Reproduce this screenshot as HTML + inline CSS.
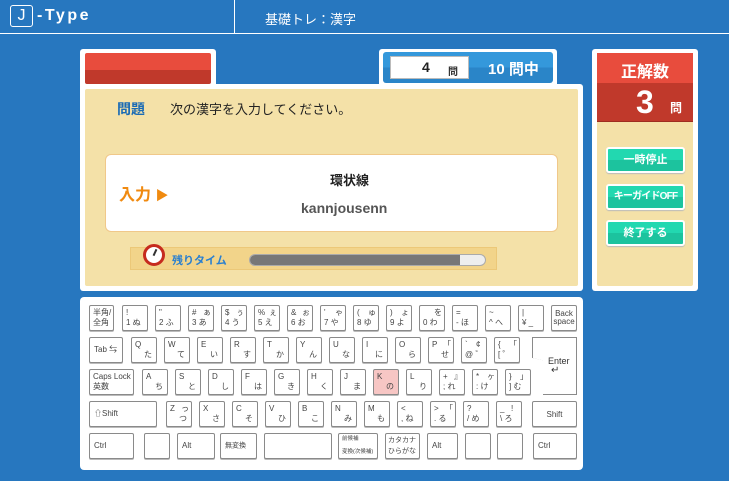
<!DOCTYPE html>
<html><head><meta charset="utf-8"><style>
*{margin:0;padding:0;box-sizing:border-box}
body{width:729px;height:481px;background:#2777bf;position:relative;overflow:hidden;font-family:"Liberation Sans","Noto Sans CJK JP",sans-serif}
.a{position:absolute}
.k{position:absolute;background:#fff;border:1px solid #8a8a8a;border-radius:2px;box-shadow:0 1px 0 #bbb;font-size:8px;color:#444;line-height:1;white-space:nowrap}
.k .tl{position:absolute;left:3px;top:3px}
.k .tr{position:absolute;left:14px;top:3px}
.k .bl{position:absolute;left:3px;bottom:3px}
.k .br{position:absolute;right:4px;bottom:3px}
.k .c{position:absolute;left:4px;top:50%;transform:translateY(-50%)}
.btn{position:absolute;left:606px;width:79px;height:26px;background:linear-gradient(#22d8b0 50%,#1cc39e 50%);border:2px solid #fff;border-radius:3px;color:#fff;font-size:11px;font-weight:bold;text-align:center;line-height:22px;box-shadow:0 1px 1px #bbb;white-space:nowrap}
</style></head><body>
<!-- header -->
<div class="a" style="left:0;top:33px;width:729px;height:1px;background:#fff"></div>
<div class="a" style="left:234px;top:0;width:1px;height:33px;background:#fff"></div>
<div class="a" style="left:10px;top:5px;width:23px;height:22px;border:1.5px solid #fff;border-radius:3px;color:#fff;font-size:16px;text-align:center;line-height:19px">J</div>
<div class="a" style="left:37px;top:7px;color:#fff;font-size:16px;letter-spacing:2.5px;font-weight:bold">-Type</div>
<div class="a" style="left:265px;top:9px;color:#fff;font-size:13px">基礎トレ：漢字</div>

<!-- left tab red board -->
<div class="a" style="left:80px;top:49px;width:136px;height:40px;background:#fff;border-radius:3px"></div>
<div class="a" style="left:85px;top:53px;width:126px;height:31px;background:linear-gradient(#e84c3d 55%,#c0392b 55%);border-radius:2px"></div>
<!-- counter tab -->
<div class="a" style="left:379px;top:49px;width:178px;height:40px;background:#fff;border-radius:3px"></div>
<div class="a" style="left:383px;top:52px;width:170px;height:31px;background:linear-gradient(#3498db 50%,#2a85c8 50%);border-radius:3px"></div>
<div class="a" style="left:390px;top:56px;width:79px;height:23px;background:#fff;border:1px solid #bbb"></div>
<div class="a" style="left:422px;top:59px;font-size:14px;font-weight:bold;color:#222">4</div>
<div class="a" style="left:448px;top:63px;font-size:10px;font-weight:bold;color:#333">問</div>
<div class="a" style="left:488px;top:58px;font-size:15px;font-weight:bold;color:#fff">10 問中</div>

<!-- main panel -->
<div class="a" style="left:80px;top:84px;width:503px;height:207px;background:#fff;border-radius:3px"></div>
<div class="a" style="left:85px;top:89px;width:493px;height:197px;background:#f4e1a8;border-radius:2px"></div>
<div class="a" style="left:117px;top:99px;font-size:14px;font-weight:bold;color:#1a6bb5">問題</div>
<div class="a" style="left:170px;top:99px;font-size:13px;color:#222">次の漢字を入力してください。</div>
<div class="a" style="left:105px;top:154px;width:453px;height:78px;background:#fff;border:1px solid #f0c88a;border-radius:6px"></div>
<div class="a" style="left:119px;top:181px;font-size:16px;font-weight:bold;color:#f08a10">入力 <span style="font-size:13px">▶</span></div>
<div class="a" style="left:330px;top:170px;font-size:13px;font-weight:bold;color:#222">環状線</div>
<div class="a" style="left:301px;top:200px;font-size:14px;font-weight:bold;color:#555">kannjousenn</div>
<div class="a" style="left:130px;top:247px;width:367px;height:23px;background:#f2d48a;border:1px solid #ecc878"></div>
<div class="a" style="left:143px;top:244px;width:22px;height:22px;border-radius:50%;background:#fff;border:3px solid #c62b1e"></div>
<div class="a" style="left:154px;top:249px;width:2px;height:7px;background:#333;transform:rotate(25deg)"></div>
<div class="a" style="left:172px;top:252px;font-size:11px;font-weight:bold;color:#2a7fcf">残りタイム</div>
<div class="a" style="left:249px;top:254px;width:237px;height:12px;background:#eee;border:1px solid #aaa;border-radius:6px;overflow:hidden"><div style="width:210px;height:12px;background:#777"></div></div>

<!-- right panel -->
<div class="a" style="left:592px;top:49px;width:106px;height:242px;background:#fff;border-radius:3px"></div>
<div class="a" style="left:597px;top:53px;width:96px;height:233px;background:#f4e1a8;border-radius:2px"></div>
<div class="a" style="left:597px;top:53px;width:96px;height:30px;background:#e84c3d"></div>
<div class="a" style="left:597px;top:83px;width:96px;height:39px;background:#c0392b;border-bottom:1px solid #9e2c20"></div>
<div class="a" style="left:597px;top:58px;width:96px;text-align:center;font-size:16px;font-weight:bold;color:#fff">正解数</div>
<div class="a" style="left:636px;top:84px;font-size:32px;font-weight:bold;color:#fff">3</div>
<div class="a" style="left:670px;top:99px;font-size:12px;font-weight:bold;color:#fff">問</div>
<div class="btn" style="top:147px">一時停止</div>
<div class="btn" style="top:184px;font-size:10px;letter-spacing:-0.8px">キーガイドOFF</div>
<div class="btn" style="top:220px">終了する</div>

<!-- keyboard -->
<div class="a" style="left:80px;top:297px;width:503px;height:173px;background:#fff;border-radius:4px"></div>

<div class="k" style="left:89px;top:305px;width:25px;height:26px"><span class="tl">半角/</span><span class="bl">全角</span></div>
<div class="k" style="left:122px;top:305px;width:26px;height:26px"><span class="tl">!</span><span class="bl">1 ぬ</span></div>
<div class="k" style="left:155px;top:305px;width:26px;height:26px"><span class="tl">"</span><span class="bl">2 ふ</span></div>
<div class="k" style="left:188px;top:305px;width:26px;height:26px"><span class="tl">#</span><span class="tr">ぁ</span><span class="bl">3 あ</span></div>
<div class="k" style="left:221px;top:305px;width:26px;height:26px"><span class="tl">$</span><span class="tr">ぅ</span><span class="bl">4 う</span></div>
<div class="k" style="left:254px;top:305px;width:26px;height:26px"><span class="tl">%</span><span class="tr">ぇ</span><span class="bl">5 え</span></div>
<div class="k" style="left:287px;top:305px;width:26px;height:26px"><span class="tl">&amp;</span><span class="tr">ぉ</span><span class="bl">6 お</span></div>
<div class="k" style="left:320px;top:305px;width:26px;height:26px"><span class="tl">'</span><span class="tr">ゃ</span><span class="bl">7 や</span></div>
<div class="k" style="left:353px;top:305px;width:26px;height:26px"><span class="tl">(</span><span class="tr">ゅ</span><span class="bl">8 ゆ</span></div>
<div class="k" style="left:386px;top:305px;width:26px;height:26px"><span class="tl">)</span><span class="tr">ょ</span><span class="bl">9 よ</span></div>
<div class="k" style="left:419px;top:305px;width:26px;height:26px"><span class="tr">を</span><span class="bl">0 わ</span></div>
<div class="k" style="left:452px;top:305px;width:26px;height:26px"><span class="tl">=</span><span class="bl">- ほ</span></div>
<div class="k" style="left:485px;top:305px;width:26px;height:26px"><span class="tl">~</span><span class="bl">^ へ</span></div>
<div class="k" style="left:518px;top:305px;width:26px;height:26px"><span class="tl">|</span><span class="bl">¥ _</span></div>
<div class="k" style="left:551px;top:305px;width:26px;height:26px;text-align:center"><span style="position:absolute;left:0;right:0;top:4px">Back</span><span style="position:absolute;left:0;right:0;bottom:4px">space</span></div>

<div class="k" style="left:89px;top:337px;width:34px;height:26px"><span class="c">Tab ⇆</span></div>
<div class="k" style="left:131px;top:337px;width:26px;height:26px"><span class="tl">Q</span><span class="br">た</span></div>
<div class="k" style="left:164px;top:337px;width:26px;height:26px"><span class="tl">W</span><span class="br">て</span></div>
<div class="k" style="left:197px;top:337px;width:26px;height:26px"><span class="tl">E</span><span class="br">い</span></div>
<div class="k" style="left:230px;top:337px;width:26px;height:26px"><span class="tl">R</span><span class="br">す</span></div>
<div class="k" style="left:263px;top:337px;width:26px;height:26px"><span class="tl">T</span><span class="br">か</span></div>
<div class="k" style="left:296px;top:337px;width:26px;height:26px"><span class="tl">Y</span><span class="br">ん</span></div>
<div class="k" style="left:329px;top:337px;width:26px;height:26px"><span class="tl">U</span><span class="br">な</span></div>
<div class="k" style="left:362px;top:337px;width:26px;height:26px"><span class="tl">I</span><span class="br">に</span></div>
<div class="k" style="left:395px;top:337px;width:26px;height:26px"><span class="tl">O</span><span class="br">ら</span></div>
<div class="k" style="left:428px;top:337px;width:26px;height:26px"><span class="tl">P</span><span class="tr">「</span><span class="br">せ</span></div>
<div class="k" style="left:461px;top:337px;width:26px;height:26px"><span class="tl">`</span><span class="tr">¢</span><span class="bl">@ ゛</span></div>
<div class="k" style="left:494px;top:337px;width:26px;height:26px"><span class="tl">{</span><span class="tr">「</span><span class="bl">[ ゜</span></div>
<div class="a" style="left:532px;top:337px;width:45px;height:58px;background:#8a8a8a;clip-path:polygon(0 0,100% 0,100% 100%,11px 100%,11px 40%,0 36%)"></div>
<div class="a" style="left:533px;top:338px;width:43px;height:56px;background:#fff;clip-path:polygon(0 0,100% 0,100% 100%,10px 100%,10px 40%,0 36%);font-size:9px;color:#333"><span style="position:absolute;left:15px;top:18px">Enter</span><span style="position:absolute;left:18px;top:27px;font-size:10px">↵</span></div>

<div class="k" style="left:89px;top:369px;width:45px;height:26px"><span class="tl">Caps Lock</span><span class="bl">英数</span></div>
<div class="k" style="left:142px;top:369px;width:26px;height:26px"><span class="tl">A</span><span class="br">ち</span></div>
<div class="k" style="left:175px;top:369px;width:26px;height:26px"><span class="tl">S</span><span class="br">と</span></div>
<div class="k" style="left:208px;top:369px;width:26px;height:26px"><span class="tl">D</span><span class="br">し</span></div>
<div class="k" style="left:241px;top:369px;width:26px;height:26px"><span class="tl">F</span><span class="br">は</span></div>
<div class="k" style="left:274px;top:369px;width:26px;height:26px"><span class="tl">G</span><span class="br">き</span></div>
<div class="k" style="left:307px;top:369px;width:26px;height:26px"><span class="tl">H</span><span class="br">く</span></div>
<div class="k" style="left:340px;top:369px;width:26px;height:26px"><span class="tl">J</span><span class="br">ま</span></div>
<div class="k" style="left:373px;top:369px;width:26px;height:26px;background:#f7c6c4"><span class="tl">K</span><span class="br">の</span></div>
<div class="k" style="left:406px;top:369px;width:26px;height:26px"><span class="tl">L</span><span class="br">り</span></div>
<div class="k" style="left:439px;top:369px;width:26px;height:26px"><span class="tl">+</span><span class="tr">』</span><span class="bl">; れ</span></div>
<div class="k" style="left:472px;top:369px;width:26px;height:26px"><span class="tl">*</span><span class="tr">ヶ</span><span class="bl">: け</span></div>
<div class="k" style="left:505px;top:369px;width:26px;height:26px"><span class="tl">}</span><span class="tr">」</span><span class="bl">] む</span></div>

<div class="k" style="left:89px;top:401px;width:68px;height:26px"><span class="c">⇧Shift</span></div>
<div class="k" style="left:166px;top:401px;width:26px;height:26px"><span class="tl">Z</span><span class="tr">っ</span><span class="br">つ</span></div>
<div class="k" style="left:199px;top:401px;width:26px;height:26px"><span class="tl">X</span><span class="br">さ</span></div>
<div class="k" style="left:232px;top:401px;width:26px;height:26px"><span class="tl">C</span><span class="br">そ</span></div>
<div class="k" style="left:265px;top:401px;width:26px;height:26px"><span class="tl">V</span><span class="br">ひ</span></div>
<div class="k" style="left:298px;top:401px;width:26px;height:26px"><span class="tl">B</span><span class="br">こ</span></div>
<div class="k" style="left:331px;top:401px;width:26px;height:26px"><span class="tl">N</span><span class="br">み</span></div>
<div class="k" style="left:364px;top:401px;width:26px;height:26px"><span class="tl">M</span><span class="br">も</span></div>
<div class="k" style="left:397px;top:401px;width:26px;height:26px"><span class="tl">&lt;</span><span class="bl">, ね</span></div>
<div class="k" style="left:430px;top:401px;width:26px;height:26px"><span class="tl">&gt;</span><span class="tr">「</span><span class="bl">. る</span></div>
<div class="k" style="left:463px;top:401px;width:26px;height:26px"><span class="tl">?</span><span class="bl">/ め</span></div>
<div class="k" style="left:496px;top:401px;width:26px;height:26px"><span class="tl">_</span><span class="tr">!</span><span class="bl">\ ろ</span></div>
<div class="k" style="left:532px;top:401px;width:45px;height:26px;text-align:center"><span style="position:absolute;left:0;right:0;top:9px">Shift</span></div>

<div class="k" style="left:89px;top:433px;width:45px;height:26px"><span class="c">Ctrl</span></div>
<div class="k" style="left:144px;top:433px;width:26px;height:26px"></div>
<div class="k" style="left:177px;top:433px;width:38px;height:26px"><span class="c">Alt</span></div>
<div class="k" style="left:220px;top:433px;width:37px;height:26px"><span class="c" style="font-size:7px">無変換</span></div>
<div class="k" style="left:264px;top:433px;width:68px;height:26px"></div>
<div class="k" style="left:338px;top:433px;width:40px;height:26px;font-size:5.5px"><span class="tl">前候補</span><span class="bl">変換(次候補)</span></div>
<div class="k" style="left:385px;top:433px;width:35px;height:26px;font-size:7px"><span class="tl" style="left:2px">カタカナ</span><span class="bl" style="left:2px">ひらがな</span></div>
<div class="k" style="left:427px;top:433px;width:31px;height:26px"><span class="c">Alt</span></div>
<div class="k" style="left:465px;top:433px;width:26px;height:26px"></div>
<div class="k" style="left:497px;top:433px;width:26px;height:26px"></div>
<div class="k" style="left:533px;top:433px;width:44px;height:26px"><span class="c">Ctrl</span></div>
</body></html>
